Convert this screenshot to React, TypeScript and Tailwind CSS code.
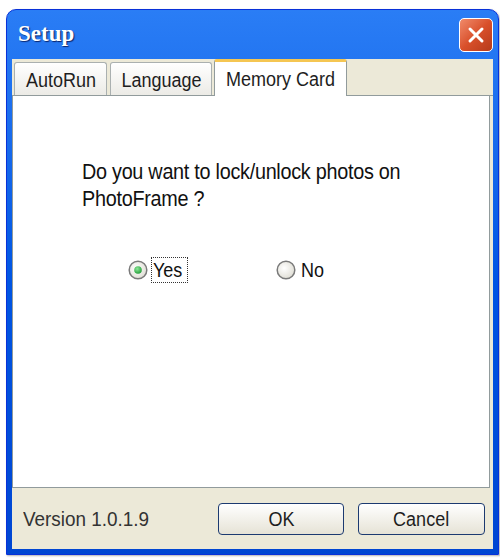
import React, { useState } from 'react';

const font = { fontFamily: '"Liberation Sans", Arial, sans-serif' };

// narrow Tahoma-ish look: tall glyphs squeezed a little sideways
const Cond = ({ children, className = '' }: { children: React.ReactNode; className?: string }) => (
  <span className={`inline-block whitespace-nowrap scale-x-[0.9] ${className}`}>{children}</span>
);

const Radio = ({ checked }: { checked: boolean }) => (
  <svg width="20" height="20" viewBox="0 0 20 20">
    <defs>
      <radialGradient id="rf" cx="40%" cy="40%" r="70%">
        <stop offset="0%" stopColor="#ffffff" />
        <stop offset="100%" stopColor="#dcdad0" />
      </radialGradient>
      <radialGradient id="dot" cx="40%" cy="35%" r="70%">
        <stop offset="0%" stopColor="#8fe89a" />
        <stop offset="100%" stopColor="#1e9a34" />
      </radialGradient>
    </defs>
    <circle cx="10" cy="10" r="8.8" fill="url(#rf)" stroke="#7a7a7a" strokeWidth="1.5" />
    {checked && <circle cx="10" cy="10" r="3.8" fill="url(#dot)" />}
  </svg>
);

const CloseIcon = () => (
  <svg width="20" height="20" viewBox="0 0 20 20">
    <path d="M4 4 L16 16 M16 4 L4 16" stroke="#ffffff" strokeWidth="3" strokeLinecap="round" />
  </svg>
);

export default function App() {
  const [choice, setChoice] = useState<'yes' | 'no'>('yes');

  return (
    <div className="w-[500px] h-[559px] bg-white pt-[9px] pl-[6px]" style={font}>
      <div className="w-[493px] h-[546px] flex flex-col rounded-t-[10px] bg-gradient-to-b from-[#2a7df5] via-[#0055e3] to-[#0046d2] border border-[#0831d9] overflow-hidden shadow-[1px_1px_2px_rgba(0,0,0,0.3)]">
        {/* Title bar */}
        <div className="h-[49px] shrink-0 flex items-center justify-between pl-[11px] pr-[5px]">
          <span
            className="text-white text-[23px] font-bold [text-shadow:1px_1px_1px_#0a246a]"
            style={{ fontFamily: '"Liberation Serif", "Times New Roman", serif' }}
          >
            Setup
          </span>
          <button className="w-[34px] h-[34px] rounded-[5px] border border-white bg-gradient-to-br from-[#f08a6a] via-[#d9502a] to-[#b53a1a] flex items-center justify-center">
            <CloseIcon />
          </button>
        </div>

        {/* Body */}
        <div className="flex-1 flex flex-col bg-[#ece9d8] mx-[5px] mb-[5px]">
          {/* Tabs */}
          <div className="h-[37px] shrink-0 flex items-end pl-[2px] border-b border-[#919b9c]">
            <div className="h-[33px] w-[93px] pt-[2px] flex items-center justify-center text-[20px] text-[#1e1e1e] bg-gradient-to-b from-white to-[#ecebe6] border border-b-0 border-[#aab0b0] rounded-t-[3px]">
              <Cond>AutoRun</Cond>
            </div>
            <div className="h-[33px] w-[102px] pt-[2px] ml-[3px] flex items-center justify-center text-[20px] text-[#1e1e1e] bg-gradient-to-b from-white to-[#ecebe6] border border-b-0 border-[#aab0b0] rounded-t-[3px]">
              <Cond>Language</Cond>
            </div>
            <div className="h-[37px] w-[133px] ml-[2px] -mb-px flex items-center justify-center text-[20px] text-[#1e1e1e] bg-white border border-b-0 border-[#919b9c] border-t-[3px] border-t-[#f5c652] rounded-t-[3px]">
              <Cond>Memory Card</Cond>
            </div>
          </div>

          {/* Panel */}
          <div className="h-[392px] shrink-0 bg-white border border-t-0 border-[#919b9c] mr-[3px] pl-[69px] pt-[62px]">
            <p className="text-[22px] leading-[27px] text-[#111] whitespace-nowrap tracking-[-0.3px] scale-x-[0.9] origin-left">
              Do you want to lock/unlock photos on
              <br />
              PhotoFrame ?
            </p>
            <div className="flex items-center mt-[45px] pl-[46px] text-[20px] text-[#111]">
              <label className="flex items-center cursor-pointer" onClick={() => setChoice('yes')}>
                <Radio checked={choice === 'yes'} />
                <span className="ml-[3px] px-[1px] leading-[24px] border border-dotted border-[#333]">
                  <Cond className="origin-left">Yes</Cond>
                </span>
              </label>
              <label className="flex items-center cursor-pointer ml-[88px]" onClick={() => setChoice('no')}>
                <Radio checked={choice === 'no'} />
                <span className="ml-[5px] leading-[24px]">
                  <Cond className="origin-left">No</Cond>
                </span>
              </label>
            </div>
          </div>

          {/* Footer */}
          <div className="flex-1 flex items-center pl-[11px] pr-[8px]">
            <span className="text-[21px] text-[#333]">
              <Cond className="origin-left">Version 1.0.1.9</Cond>
            </span>
            <button className="ml-auto w-[126px] h-[32px] rounded-[4px] border border-[#1c3a70] bg-gradient-to-b from-white to-[#e6e3d6] text-[20px] text-[#1e1e1e]">
              <Cond>OK</Cond>
            </button>
            <button className="ml-[14px] w-[127px] h-[32px] rounded-[4px] border border-[#1c3a70] bg-gradient-to-b from-white to-[#e6e3d6] text-[20px] text-[#1e1e1e]">
              <Cond>Cancel</Cond>
            </button>
          </div>
        </div>
      </div>
    </div>
  );
}
